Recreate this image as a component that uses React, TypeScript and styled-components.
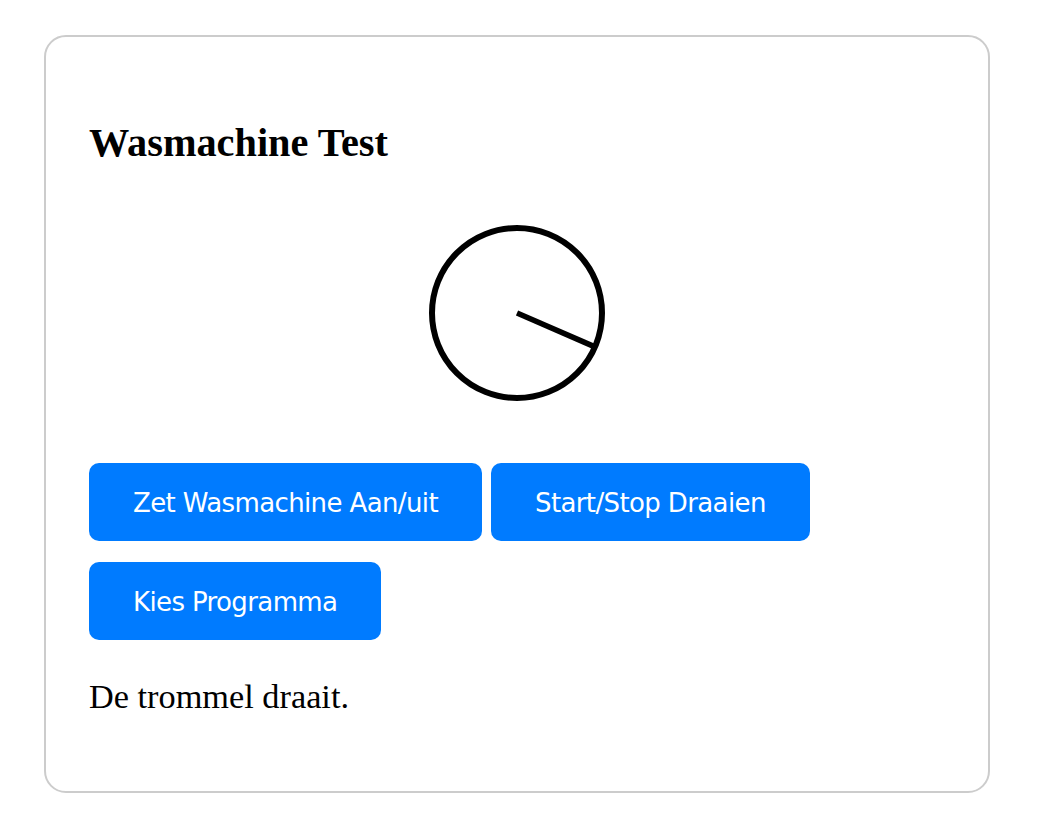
import React from "react";
import styled, { createGlobalStyle } from "styled-components";

const GlobalStyle = createGlobalStyle`
  html, body {
    margin: 0;
    padding: 0;
    background: #ffffff;
  }
  body {
    font-family: "Liberation Serif", "Times New Roman", serif;
    color: #000000;
  }
`;

const Card = styled.div`
  box-sizing: border-box;
  width: 946px;
  height: 758px;
  margin: 35px 0 0 44px;
  padding: 0 43px;
  border: 2px solid #cccccc;
  border-radius: 22px;
  display: flex;
  flex-direction: column;
`;

const Title = styled.h2`
  margin: 83px 0 0;
  font-size: 40.3px;
  line-height: 46px;
  font-weight: bold;
`;

const Drum = styled.svg`
  display: block;
  align-self: center;
  margin-top: 52px;
`;

const Buttons = styled.div`
  display: flex;
  flex-wrap: wrap;
  column-gap: 9px;
  row-gap: 21px;
  margin-top: 55px;
`;

const Button = styled.button`
  height: 78px;
  padding: 2px 44px 0;
  border: none;
  border-radius: 10px;
  background: #007bff;
  color: #ffffff;
  font-family: "DejaVu Sans", Verdana, sans-serif;
  font-size: 26px;
  letter-spacing: -0.62px;
  cursor: pointer;
`;

const Status = styled.p`
  margin: 36px 0 0;
  font-size: 34.3px;
  line-height: 40px;
`;

const App = () => {
  const angle = (23.5 * Math.PI) / 180;
  const r = 85;

  return (
    <>
      <GlobalStyle />
      <Card>
        <Title>Wasmachine Test</Title>
        <Drum width="190" height="190" viewBox="0 0 190 190">
          <circle cx="95" cy="95" r={r} fill="none" stroke="#000" strokeWidth="6" />
          <line
            x1="95"
            y1="95"
            x2={95 + r * Math.cos(angle)}
            y2={95 + r * Math.sin(angle)}
            stroke="#000"
            strokeWidth="5.5"
          />
        </Drum>
        <Buttons>
          <Button>Zet Wasmachine Aan/uit</Button>
          <Button>Start/Stop Draaien</Button>
          <Button>Kies Programma</Button>
        </Buttons>
        <Status>De trommel draait.</Status>
      </Card>
    </>
  );
};

export default App;
